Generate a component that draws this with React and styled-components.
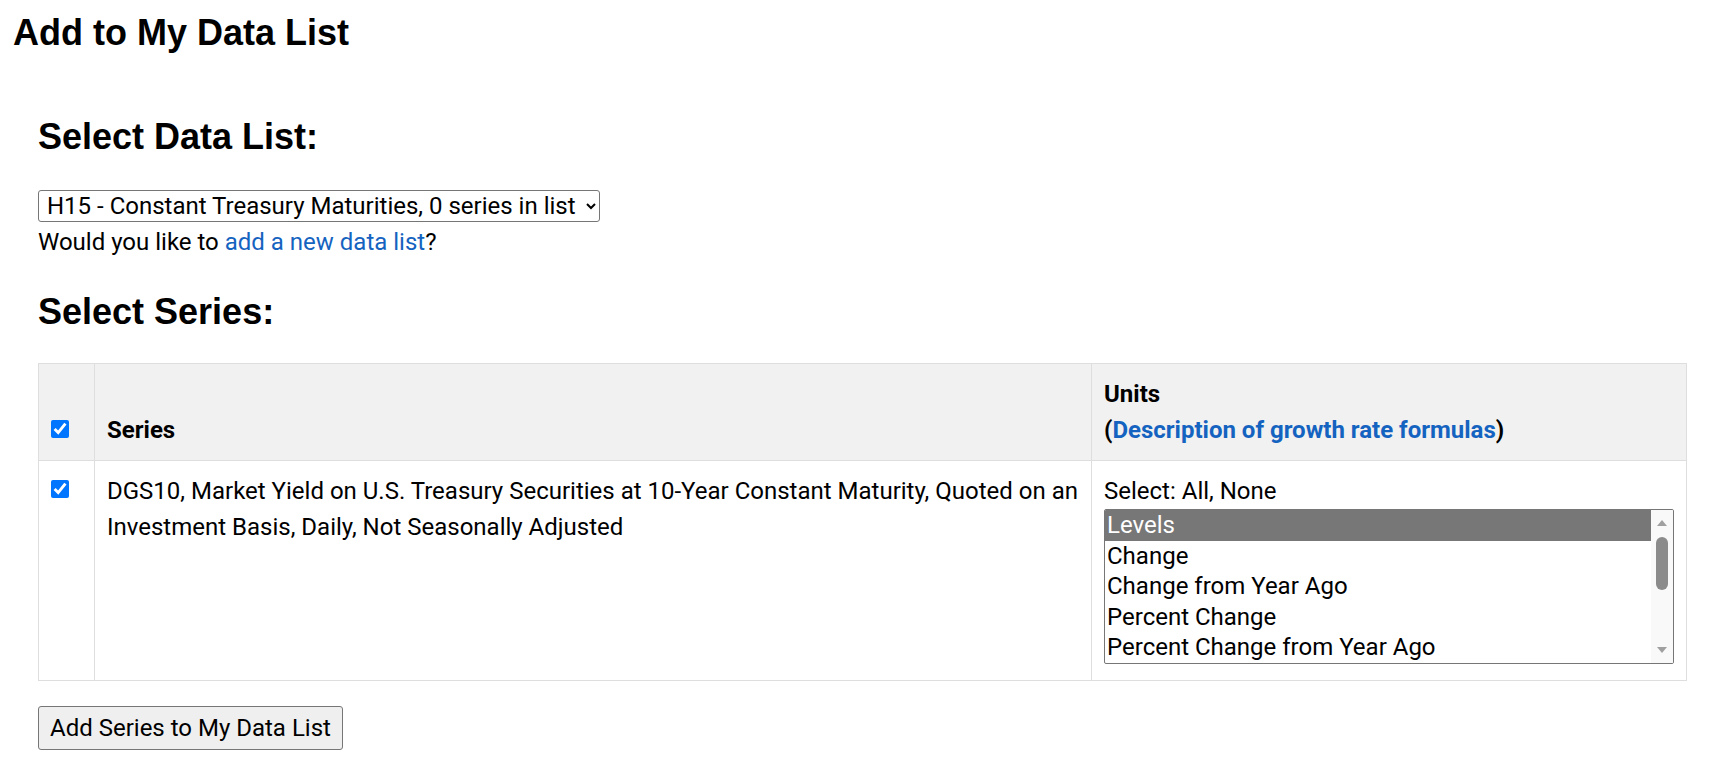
import { useState } from "react";
import styled, { createGlobalStyle } from "styled-components";

const GlobalStyle = createGlobalStyle`
  body {
    margin: 0;
    background: #fff;
    color: #000;
    font-family: Roboto, "Liberation Sans", Arial, sans-serif;
    font-size: 24px;
  }
`;

const LINK = "#1563c0";
const BORDER = "#dedede";

const Page = styled.div`
  padding: 12px 23px 40px 0;
`;

const Title = styled.h1`
  margin: 0 0 0 13px;
  font-family: "Liberation Sans", Arial, sans-serif;
  font-size: 36px;
  font-weight: 700;
  line-height: normal;
`;

const Section = styled.div`
  padding-left: 38px;
`;

const SectionTitle = styled.h2`
  margin: ${(props) => props.$top}px 0 0;
  font-family: "Liberation Sans", Arial, sans-serif;
  font-size: 36px;
  font-weight: 700;
  line-height: normal;
`;

const ListSelect = styled.select`
  display: block;
  width: 562px;
  margin-top: 32px;
  height: 32px;
  padding: 0 2px 0 4px;
  font-family: Roboto, sans-serif;
  font-size: 24px;
  color: #000;
  background: #fff;
  border: 1px solid #767676;
  border-radius: 3px;
`;

const Hint = styled.p`
  margin: 6px 0 0;
  line-height: 28px;
`;

const Link = styled.a`
  color: ${LINK};
  text-decoration: none;
  cursor: pointer;
`;

const Table = styled.table`
  width: 100%;
  margin-top: 30px;
  border-collapse: collapse;
  table-layout: fixed;
  border: 1px solid ${BORDER};
`;

const Th = styled.th`
  background: #f1f1f1;
  border: 1px solid ${BORDER};
  padding: 12px 12px 12px;
  text-align: left;
  vertical-align: bottom;
  font-weight: 700;
  line-height: 36px;
`;

const Td = styled.td`
  border: 1px solid ${BORDER};
  padding: 12px 12px 12px;
  vertical-align: top;
  line-height: 36px;
`;

const Check = styled.input.attrs({ type: "checkbox" })`
  width: 18px;
  height: 18px;
  margin: 0;
  vertical-align: ${(props) => (props.$head ? "0" : "1px")};
  accent-color: #0075ff;
`;

/* units listbox, drawn by hand so the scrollbar shows like the original */
const Listbox = styled.div`
  display: flex;
  height: 153px;
  margin-bottom: 4px;
  border: 1px solid #767676;
  border-radius: 2px;
  background: #fff;
  overflow: hidden;
  line-height: normal;
`;

const Options = styled.div`
  flex: 1;
  min-width: 0;
  overflow: hidden;
`;

const Option = styled.div`
  height: 30.5px;
  box-sizing: border-box;
  padding: 1px 2px 0;
  line-height: 29.5px;
  white-space: nowrap;
  cursor: default;
  background: ${(props) => (props.$selected ? "#777" : "transparent")};
  color: ${(props) => (props.$selected ? "#fff" : "#000")};
`;

const ScrollBar = styled.div`
  display: flex;
  flex-direction: column;
  width: 22px;
  background: #f9f9f9;
`;

const ArrowButton = styled.div`
  display: flex;
  justify-content: center;
  align-items: ${(props) => (props.$down ? "flex-end" : "flex-start")};
  height: 22px;
  padding: ${(props) => (props.$down ? "0 0 10px" : "10px 0 0")};
  box-sizing: border-box;

  &::before {
    content: "";
    width: 0;
    height: 0;
    border-left: 5.5px solid transparent;
    border-right: 5.5px solid transparent;
    ${(props) =>
      props.$down
        ? "border-top: 6px solid #a0a0a0;"
        : "border-bottom: 6px solid #a0a0a0;"}
  }
`;

const Track = styled.div`
  flex: 1;
  padding: 5px 5px 0;
`;

const Thumb = styled.div`
  height: 53px;
  border-radius: 6px;
  background: #8b8b8b;
`;

const SubmitButton = styled.button`
  margin-top: 25px;
  padding: 7px 11px;
  font-family: Roboto, sans-serif;
  font-size: 24px;
  line-height: 28px;
  color: #000;
  background: #efefef;
  border: 1px solid #767676;
  border-radius: 3px;
  cursor: pointer;
`;

const units = [
  { value: "lin", label: "Levels" },
  { value: "chg", label: "Change" },
  { value: "ch1", label: "Change from Year Ago" },
  { value: "pch", label: "Percent Change" },
  { value: "pc1", label: "Percent Change from Year Ago" },
  { value: "pca", label: "Compounded Annual Rate of Change" },
  { value: "cch", label: "Continuously Compounded Rate of Change" },
  { value: "cca", label: "Continuously Compounded Annual Rate of Change" },
  { value: "log", label: "Natural Log" },
];

const App = () => {
  const [selected, setSelected] = useState(["lin"]);

  const toggle = (value) => {
    setSelected((prev) =>
      prev.includes(value) ? prev.filter((v) => v !== value) : [...prev, value]
    );
  };

  return (
    <>
      <GlobalStyle />
      <Page>
        <Title>Add to My Data List</Title>
        <Section>
          <SectionTitle $top={62}>Select Data List:</SectionTitle>
          <ListSelect defaultValue="h15">
            <option value="h15">H15 - Constant Treasury Maturities, 0 series in list</option>
          </ListSelect>
          <Hint>
            Would you like to <Link>add a new data list</Link>?
          </Hint>

          <SectionTitle $top={35}>Select Series:</SectionTitle>
          <Table>
            <colgroup>
              <col style={{ width: 56 }} />
              <col />
              <col style={{ width: 595 }} />
            </colgroup>
            <thead>
              <tr>
                <Th>
                  <Check $head defaultChecked />
                </Th>
                <Th>Series</Th>
                <Th>
                  Units
                  <br />(<Link>Description of growth rate formulas</Link>)
                </Th>
              </tr>
            </thead>
            <tbody>
              <tr>
                <Td>
                  <Check defaultChecked />
                </Td>
                <Td>
                  DGS10, Market Yield on U.S. Treasury Securities at 10-Year Constant Maturity,
                  Quoted on an Investment Basis, Daily, Not Seasonally Adjusted
                </Td>
                <Td>
                  Select: All, None
                  <Listbox role="listbox" aria-multiselectable="true">
                    <Options>
                      {units.map((u) => (
                        <Option
                          key={u.value}
                          role="option"
                          aria-selected={selected.includes(u.value)}
                          $selected={selected.includes(u.value)}
                          onClick={() => toggle(u.value)}
                        >
                          {u.label}
                        </Option>
                      ))}
                    </Options>
                    <ScrollBar>
                      <ArrowButton />
                      <Track>
                        <Thumb />
                      </Track>
                      <ArrowButton $down />
                    </ScrollBar>
                  </Listbox>
                </Td>
              </tr>
            </tbody>
          </Table>
          <SubmitButton>Add Series to My Data List</SubmitButton>
        </Section>
      </Page>
    </>
  );
};

export default App;
